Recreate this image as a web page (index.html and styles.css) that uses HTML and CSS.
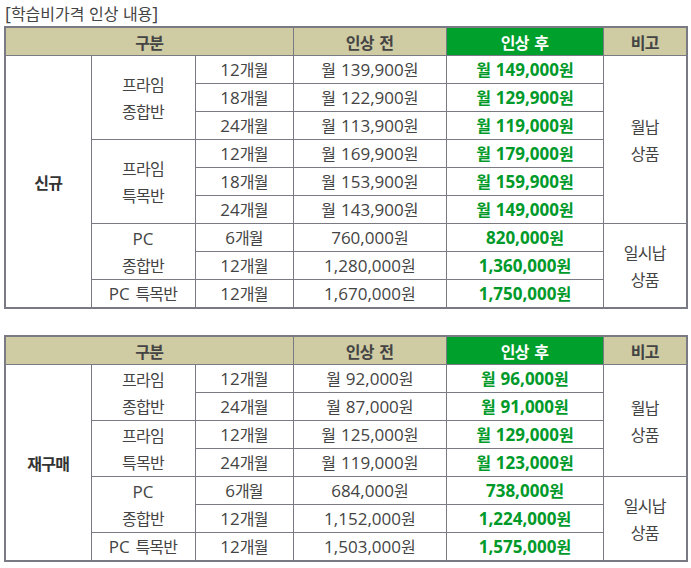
FILE: index.html
```html
<!DOCTYPE html>
<html lang="ko">
<head>
<meta charset="utf-8">
<link rel="stylesheet" href="styles.css">
</head>
<body>
<div class="page">
  <h2 class="title"><span class="n">[</span>학습비가격 인상 내용<span class="n">]</span></h2>
  <table class="price">
    <colgroup><col class="c1"><col class="c2"><col class="c3"><col class="c4"><col class="c5"><col class="c6"></colgroup>
    <thead>
      <tr><th colspan="3">구분</th><th>인상 전</th><th class="after">인상 후</th><th>비고</th></tr>
    </thead>
    <tbody>
      <tr><td rowspan="9" class="kind">신규</td><td rowspan="3" class="multi">프라임<br>종합반</td><td><span class="n">12</span>개월</td><td>월 <span class="n">139,900</span>원</td><td class="new">월 <span class="n">149,000</span>원</td><td rowspan="6" class="multi">월납<br>상품</td></tr>
      <tr><td><span class="n">18</span>개월</td><td>월 <span class="n">122,900</span>원</td><td class="new">월 <span class="n">129,900</span>원</td></tr>
      <tr><td><span class="n">24</span>개월</td><td>월 <span class="n">113,900</span>원</td><td class="new">월 <span class="n">119,000</span>원</td></tr>
      <tr><td rowspan="3" class="multi">프라임<br>특목반</td><td><span class="n">12</span>개월</td><td>월 <span class="n">169,900</span>원</td><td class="new">월 <span class="n">179,000</span>원</td></tr>
      <tr><td><span class="n">18</span>개월</td><td>월 <span class="n">153,900</span>원</td><td class="new">월 <span class="n">159,900</span>원</td></tr>
      <tr><td><span class="n">24</span>개월</td><td>월 <span class="n">143,900</span>원</td><td class="new">월 <span class="n">149,000</span>원</td></tr>
      <tr><td rowspan="2" class="multi"><span class="n">PC</span><br>종합반</td><td><span class="n">6</span>개월</td><td><span class="n">760,000</span>원</td><td class="new"><span class="n">820,000</span>원</td><td rowspan="3" class="multi">일시납<br>상품</td></tr>
      <tr><td><span class="n">12</span>개월</td><td><span class="n">1,280,000</span>원</td><td class="new"><span class="n">1,360,000</span>원</td></tr>
      <tr><td><span class="n">PC</span> 특목반</td><td><span class="n">12</span>개월</td><td><span class="n">1,670,000</span>원</td><td class="new"><span class="n">1,750,000</span>원</td></tr>
    </tbody>
  </table>
  <table class="price second">
    <colgroup><col class="c1"><col class="c2"><col class="c3"><col class="c4"><col class="c5"><col class="c6"></colgroup>
    <thead>
      <tr><th colspan="3">구분</th><th>인상 전</th><th class="after">인상 후</th><th>비고</th></tr>
    </thead>
    <tbody>
      <tr><td rowspan="7" class="kind">재구매</td><td rowspan="2" class="multi">프라임<br>종합반</td><td><span class="n">12</span>개월</td><td>월 <span class="n">92,000</span>원</td><td class="new">월 <span class="n">96,000</span>원</td><td rowspan="4" class="multi">월납<br>상품</td></tr>
      <tr><td><span class="n">24</span>개월</td><td>월 <span class="n">87,000</span>원</td><td class="new">월 <span class="n">91,000</span>원</td></tr>
      <tr><td rowspan="2" class="multi">프라임<br>특목반</td><td><span class="n">12</span>개월</td><td>월 <span class="n">125,000</span>원</td><td class="new">월 <span class="n">129,000</span>원</td></tr>
      <tr><td><span class="n">24</span>개월</td><td>월 <span class="n">119,000</span>원</td><td class="new">월 <span class="n">123,000</span>원</td></tr>
      <tr><td rowspan="2" class="multi"><span class="n">PC</span><br>종합반</td><td><span class="n">6</span>개월</td><td><span class="n">684,000</span>원</td><td class="new"><span class="n">738,000</span>원</td><td rowspan="3" class="multi">일시납<br>상품</td></tr>
      <tr><td><span class="n">12</span>개월</td><td><span class="n">1,152,000</span>원</td><td class="new"><span class="n">1,224,000</span>원</td></tr>
      <tr><td><span class="n">PC</span> 특목반</td><td><span class="n">12</span>개월</td><td><span class="n">1,503,000</span>원</td><td class="new"><span class="n">1,575,000</span>원</td></tr>
    </tbody>
  </table>
</div>
</body>
</html>
```
FILE: styles.css
```css
html, body {
  margin: 0;
  padding: 0;
  background: #fff;
}
.page {
  padding: 2px 4px 0 4px;
  font-family: "Noto Sans CJK KR", "Noto Sans", sans-serif;
  color: #444;
}
.n {
  font-family: "Open Sans", "Noto Sans", sans-serif;
  font-size: 17px;
  letter-spacing: 0;
}
.title {
  margin: 0;
  height: 24px;
  font-size: 16px;
  letter-spacing: 0;
  word-spacing: 0;
  line-height: 22px;
  font-weight: normal;
  color: #444;
  padding-left: 1px;
}
.title .n {
  font-size: 18px;
}
.price {
  border-collapse: collapse;
  table-layout: fixed;
  width: 683px;
  font-size: 16px;
  letter-spacing: -0.8px;
  word-spacing: 2px;
  border: 2px solid #7a7a84;
}
.second {
  margin-top: 26px;
}
.c1 { width: 86px; }
.c2 { width: 104px; }
.c3 { width: 98px; }
.c4 { width: 153px; }
.c5 { width: 157px; }
.c6 { width: 84px; }
.price th, .price td {
  border: 1px solid #7a7a84;
  text-align: center;
  vertical-align: middle;
  padding: 0;
  height: 27px;
  line-height: 26px;
  white-space: nowrap;
}
.price td.multi {
  line-height: 27px;
}
.price th {
  background: #cfcba3;
  font-weight: bold;
  color: #444;
}
.price th.after {
  background: #00a02c;
  color: #fff;
}
.price td.kind {
  font-weight: bold;
  color: #333;
}
.price td.new {
  color: #009a2a;
  font-weight: bold;
}
```
